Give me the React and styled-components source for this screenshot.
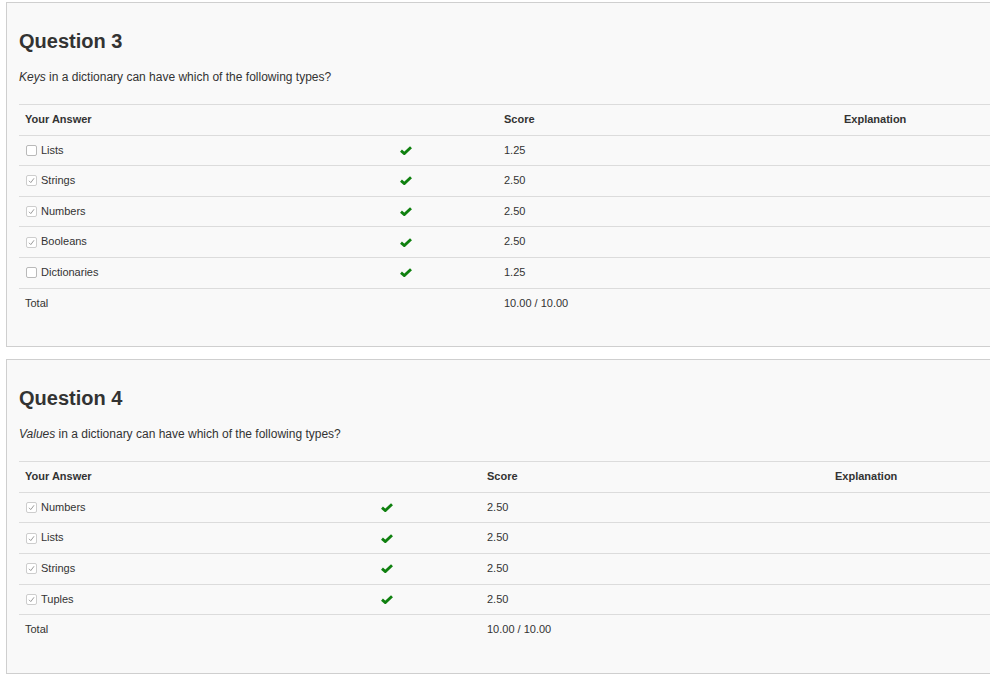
import React from "react";
import styled, { createGlobalStyle } from "styled-components";

const GlobalStyle = createGlobalStyle`
  html, body {
    margin: 0;
    padding: 0;
    background: #fff;
    overflow: hidden;
  }
  body {
    font-family: "Liberation Sans", Arial, Helvetica, sans-serif;
    color: #333;
  }
`;

const Page = styled.div`
  padding: 2px 0 0 6px;
  width: 1100px;
`;

const Panel = styled.section`
  width: 1000px;
  box-sizing: border-box;
  background: #f9f9f9;
  border: 1px solid #cfcfcf;
  padding: 27px 12px 28px;
  margin-bottom: 12px;
`;

const Heading = styled.h3`
  margin: 0;
  font-size: 20px;
  line-height: 22px;
  font-weight: bold;
  color: #333;
`;

const Prompt = styled.p`
  margin: 17px 0 18px;
  font-size: 12px;
  line-height: 17px;
  color: #333;
`;

const Table = styled.div`
  display: grid;
  grid-template-columns: ${(p) => p.$cols};
  font-size: 11px;
  color: #333;
`;

const Cell = styled.div`
  border-top: 1px solid #dcdcdc;
  padding: 8px 6px;
  line-height: 13.6px;
  height: 13.6px;
  display: flex;
  align-items: center;
  gap: 4px;
  font-weight: ${(p) => (p.$head ? "bold" : "normal")};
  white-space: nowrap;
`;

const Box = styled.span`
  width: 9px;
  height: 9px;
  border: 1px solid ${(p) => (p.$checked ? "#cdcdcd" : "#b9b9b9")};
  border-radius: 2px;
  background: #fff;
  display: inline-flex;
  align-items: center;
  justify-content: center;
  margin-left: 1px;
`;

const Tick = () => (
  <svg width="12" height="9" viewBox="0 0 12 9">
    <path d="M1 4.6 L4.3 7.6 L11 1.2" fill="none" stroke="#0f800f" strokeWidth="2.8" strokeLinejoin="miter" />
  </svg>
);

const Checkbox = ({ checked }) => (
  <Box $checked={checked}>
    {checked && (
      <svg width="7" height="7" viewBox="0 0 7 7">
        <path d="M1 3.8 L2.8 5.6 L6 1.3" fill="none" stroke="#9a9a9a" strokeWidth="1" />
      </svg>
    )}
  </Box>
);

const questions = [
  {
    title: "Question 3",
    em: "Keys",
    rest: " in a dictionary can have which of the following types?",
    cols: "375px 104px 340px 1fr",
    rows: [
      ["Lists", false, "1.25"],
      ["Strings", true, "2.50"],
      ["Numbers", true, "2.50"],
      ["Booleans", true, "2.50"],
      ["Dictionaries", false, "1.25"],
    ],
  },
  {
    title: "Question 4",
    em: "Values",
    rest: " in a dictionary can have which of the following types?",
    cols: "356px 106px 348px 1fr",
    rows: [
      ["Numbers", true, "2.50"],
      ["Lists", true, "2.50"],
      ["Strings", true, "2.50"],
      ["Tuples", true, "2.50"],
    ],
  },
];

function Question({ q }) {
  return (
    <Panel>
      <Heading>{q.title}</Heading>
      <Prompt>
        <em>{q.em}</em>
        {q.rest}
      </Prompt>
      <Table $cols={q.cols}>
        <Cell $head>Your Answer</Cell>
        <Cell $head />
        <Cell $head>Score</Cell>
        <Cell $head>Explanation</Cell>
        {q.rows.map(([label, checked, score]) => (
          <React.Fragment key={label}>
            <Cell>
              <Checkbox checked={checked} />
              {label}
            </Cell>
            <Cell>
              <Tick />
            </Cell>
            <Cell>{score}</Cell>
            <Cell />
          </React.Fragment>
        ))}
        <Cell>Total</Cell>
        <Cell />
        <Cell>10.00 / 10.00</Cell>
        <Cell />
      </Table>
    </Panel>
  );
}

export default function App() {
  return (
    <Page>
      <GlobalStyle />
      {questions.map((q) => (
        <Question key={q.title} q={q} />
      ))}
    </Page>
  );
}
